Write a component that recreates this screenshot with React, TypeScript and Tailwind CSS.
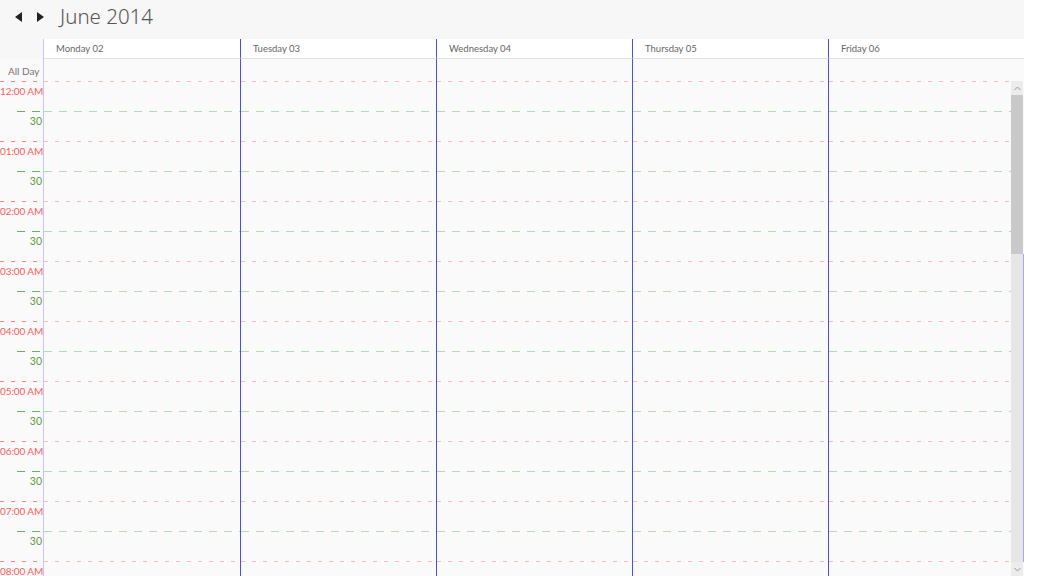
import React from "react";

const days = ["Monday 02", "Tuesday 03", "Wednesday 04", "Thursday 05", "Friday 06"];
const hours = ["12:00 AM", "01:00 AM", "02:00 AM", "03:00 AM", "04:00 AM", "05:00 AM", "06:00 AM", "07:00 AM", "08:00 AM"];

function GutterHour({ label }: { label: string }) {
  return (
    <div className="flex h-[60px] shrink-0 flex-col">
      <div className="h-px w-full bg-[image:repeating-linear-gradient(90deg,rgb(255,130,130)_0px,rgb(255,130,130)_4px,rgba(0,0,0,0)_4px,rgba(0,0,0,0)_11px)]" />
      <div className="h-[29px] whitespace-nowrap pr-[1px] pt-[3px] text-right text-[10px] leading-[12px] tracking-[-0.1px] text-[#ff5a5a]">{label}</div>
      <div className="ml-[17px] h-px bg-[image:repeating-linear-gradient(90deg,rgb(100,180,100)_0px,rgb(100,180,100)_8px,rgba(0,0,0,0)_8px,rgba(0,0,0,0)_15px)]" />
      <div className="h-[29px] whitespace-nowrap pr-[1px] pt-[3px] text-right text-[10.5px] leading-[12px] text-[#5e9a40]">30</div>
    </div>
  );
}

function ColHour() {
  return (
    <div className="flex h-[60px] shrink-0 flex-col">
      <div className="h-px w-full bg-[image:repeating-linear-gradient(90deg,rgb(255,185,185)_0px,rgb(255,185,185)_4px,rgba(0,0,0,0)_4px,rgba(0,0,0,0)_11px)]" />
      <div className="h-[29px]" />
      <div className="h-px w-full bg-[image:repeating-linear-gradient(90deg,rgb(180,220,180)_0px,rgb(180,220,180)_8px,rgba(0,0,0,0)_8px,rgba(0,0,0,0)_15px)]" />
      <div className="h-[29px]" />
    </div>
  );
}

export default function App() {
  return (
    <div className="flex h-[576px] w-[1046px] overflow-hidden bg-white font-['Lato','Open_Sans',sans-serif]">
      <div className="flex h-full w-[1024px] shrink-0 flex-col bg-[#fafafa]">
        {/* top bar */}
        <div className="flex h-[39px] shrink-0 items-center bg-[#f7f7f7]">
          <svg width="8" height="10" viewBox="0 0 8 10" className="ml-[15px] mt-[-6px]">
            <path d="M7 0 L0 5 L7 10 Z" fill="#222" />
          </svg>
          <svg width="8" height="10" viewBox="0 0 8 10" className="ml-[14px] mt-[-6px]">
            <path d="M0 0 L7 5 L0 10 Z" fill="#222" />
          </svg>
          <div className="ml-[15px] mt-[-6px] font-['Noto_Sans','Open_Sans',sans-serif] text-[20.5px] font-light leading-none text-[#555]">
            June 2014
          </div>
        </div>
        {/* header row */}
        <div className="flex h-[20px] shrink-0">
          <div className="w-[44px] shrink-0 border-r border-[#c4c4ff] bg-[#f7f7f7]" />
          {days.map((d, i) => (
            <div
              key={d}
              className={`flex w-[196px] shrink-0 items-center border-b border-[#e2e2e2] bg-white pl-[12px] pt-[2px] text-[9.5px] text-[#666] ${i > 0 ? "border-l border-l-[#4a4aff]" : ""}`}
            >
              {d}
            </div>
          ))}
        </div>
        {/* all day row */}
        <div className="flex h-[22px] shrink-0">
          <div className="w-[44px] shrink-0 whitespace-nowrap border-r border-[#c4c4ff] pl-[8px] pt-[6px] text-[10px] leading-[12px] text-[#777]">
            All Day
          </div>
          {days.map((d, i) => (
            <div key={d} className={`w-[196px] shrink-0 ${i > 0 ? "border-l border-[#4a4aff]" : ""}`} />
          ))}
        </div>
        {/* body */}
        <div className="relative flex min-h-0 flex-1 overflow-hidden">
          <div className="flex w-[44px] shrink-0 flex-col border-r border-[#c4c4ff]">
            {hours.map((h) => (
              <GutterHour key={h} label={h} />
            ))}
          </div>
          {days.map((d, i) => (
            <div key={d} className={`flex w-[196px] shrink-0 flex-col ${i > 0 ? "border-l border-[#4a4aff]" : ""}`}>
              {hours.map((h) => (
                <ColHour key={h} />
              ))}
            </div>
          ))}
          {/* scrollbar */}
          <div className="absolute right-0 top-0 flex h-full w-[13px] flex-col">
            <div className="flex h-[14px] w-[12px] items-center justify-center bg-[#ececec]">
              <svg width="7" height="5" viewBox="0 0 7 5">
                <path d="M0.5 4 L3.5 1 L6.5 4" stroke="#999" strokeWidth="1" fill="none" />
              </svg>
            </div>
            <div className="h-[159px] w-[12px] bg-[#c9c9c9]" />
            <div className="flex-1 border-r border-[#a8a8f0] bg-[#e6e6e6]" />
            <div className="flex h-[14px] w-[12px] items-center justify-center bg-[#ececec]">
              <svg width="7" height="5" viewBox="0 0 7 5">
                <path d="M0.5 1 L3.5 4 L6.5 1" stroke="#999" strokeWidth="1" fill="none" />
              </svg>
            </div>
          </div>
        </div>
      </div>
    </div>
  );
}
